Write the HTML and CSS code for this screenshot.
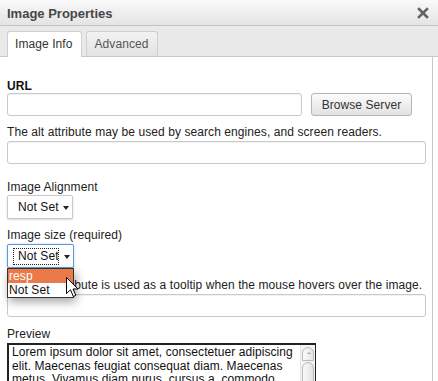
FILE: index.html
```html
<!DOCTYPE html>
<html lang="en">
<head>
    <meta charset="UTF-8">
    <title>Image Properties</title>
    <link rel="stylesheet" href="styles.css">
</head>
<body>
    <div class="dialog">
        <div class="titlebar">
            <span class="title">Image Properties</span>
            <span class="close">
                <svg width="12" height="12" viewBox="0 0 12 12"><path d="M2 2 L10 10 M10 2 L2 10" stroke="#555" stroke-width="2.6" stroke-linecap="square"/></svg>
            </span>
        </div>

        <div class="tabs">
            <a class="tab active">Image Info</a>
            <a class="tab">Advanced</a>
        </div>

        <div class="body">
            <div class="label bold first">URL</div>
            <div class="url-row">
                <div class="text-input url"></div>
                <button class="browse">Browse Server</button>
            </div>

            <div class="label gap-s">The alt attribute may be used by search engines, and screen readers.</div>
            <div class="text-input wide"></div>

            <div class="label gap-l">Image Alignment</div>
            <div class="select">
                <span class="select-text">Not Set</span>
                <span class="arrow"></span>
            </div>

            <div class="label gap-s">Image size (required)</div>
            <div class="select-holder">
                <div class="select focused">
                    <span class="select-text dotted">Not Set</span>
                    <span class="arrow"></span>
                </div>
                <!-- opened list of the select -->
                <ul class="dropdown">
                    <li class="hover">resp</li>
                    <li>Not Set</li>
                </ul>
                <svg class="cursor" width="13" height="21" viewBox="0 0 13 21">
                    <path d="M0.5 0.5 L0.5 16.5 L4.5 12.8 L7.3 19.5 L9.8 18.4 L7.1 12 L12 12 Z" fill="#fff" stroke="#000" stroke-width="1" stroke-linejoin="round"/>
                </svg>
            </div>

            <div class="label gap-m">The title attribute is used as a tooltip when the mouse hovers over the image.</div>
            <div class="text-input wide"></div>

            <div class="label gap-m">Preview</div>
            <div class="preview">
                <div class="preview-text">Lorem ipsum dolor sit amet, consectetuer adipiscing elit. Maecenas feugiat consequat diam. Maecenas metus. Vivamus diam purus, cursus a, commodo non, facilisis vitae, nulla.</div>
                <div class="scrollbar">
                    <div class="scroll-up"></div>
                    <div class="scroll-thumb"></div>
                </div>
            </div>
        </div>
    </div>
</body>
</html>
```

FILE: styles.css
```css
body {
    margin: 0;
    padding: 0;
    font-family: 'Liberation Sans', Arial, sans-serif;
    font-size: 12px;
    letter-spacing: 0.08px;
    color: #222;
    background: #fff;
}

.dialog {
    width: 438px;
    height: 381px;
    overflow: hidden;
}

.titlebar {
    height: 25px;
    display: flex;
    align-items: center;
    justify-content: space-between;
    padding: 0 9px 0 7px;
    background: linear-gradient(#f9f9f9, #e4e4e4);
    border-bottom: 1px solid #c4c4c4;
}

.title {
    font-size: 13px;
    font-weight: bold;
    color: #474747;
    padding-top: 1px;
    letter-spacing: 0;
}

.close {
    display: flex;
    opacity: 0.9;
}

.tabs {
    height: 30px;
    display: flex;
    align-items: flex-end;
    gap: 4px;
    padding: 0 7px;
    background: #e9e9e9;
    border-bottom: 1px solid #c8c8c8;
}

.tab {
    height: 24px;
    line-height: 24px;
    padding: 0 8px;
    font-size: 12px;
    color: #555;
    background: linear-gradient(#f2f2f2, #e3e3e3);
    border: 1px solid #cfcfcf;
    border-bottom: none;
    border-radius: 3px 3px 0 0;
}

.tab.active {
    height: 25px;
    padding: 0 8px 0 7px;
    background: #fff;
    color: #333;
    margin-bottom: -1px;
}

.body {
    height: 400px;
    padding: 0 0 0 7px;
    margin-right: 5px;
    border-right: 1px solid #c8c8c8;
}

.label {
    line-height: 14px;
    white-space: nowrap;
}

.label.bold {
    font-weight: bold;
    color: #111;
}

.label.first {
    padding-top: 22px;
}

.gap-s {
    margin-top: 9px;
    margin-bottom: 2px;
}

.gap-m {
    margin-top: 10px;
    margin-bottom: 2px;
}

.gap-l {
    margin-top: 16px;
    margin-bottom: 1px;
}

.url-row {
    display: flex;
    gap: 9px;
}

.text-input {
    height: 21px;
    border: 1px solid #c9c9c9;
    border-radius: 3px;
    background: #fff;
    box-shadow: inset 0 1px 1px rgba(0, 0, 0, 0.06);
}

.text-input.url {
    width: 293px;
}

.text-input.wide {
    width: 417px;
}

.browse {
    width: 101px;
    height: 23px;
    padding: 0;
    font-family: 'Liberation Sans', Arial, sans-serif;
    font-size: 12px;
    letter-spacing: 0.08px;
    color: #333;
    background: linear-gradient(#fbfbfb, #e2e2e2);
    border: 1px solid #b6b6b6;
    border-radius: 3px;
}

.select {
    width: 64px;
    height: 22px;
    display: flex;
    align-items: center;
    border: 1px solid #c9c9c9;
    border-radius: 2px;
    background: #fff;
    box-shadow: 0 1px 2px rgba(0, 0, 0, 0.15);
    position: relative;
}

.select-text {
    margin-left: 10px;
    font-size: 12px;
    color: #111;
}

.arrow {
    position: absolute;
    right: 3px;
    top: 10px;
    width: 0;
    height: 0;
    border-left: 3px solid transparent;
    border-right: 3px solid transparent;
    border-top: 4px solid #222;
}

.select.focused {
    width: 65px;
    border: 1px solid #5a9bdc;
    box-shadow: 0 0 2px rgba(90, 155, 220, 0.5);
}

.select-text.dotted {
    margin-left: 5px;
    width: 40px;
    padding-left: 4px;
    height: 15px;
    line-height: 15px;
    overflow: hidden;
    white-space: nowrap;
    border: 1px dotted #222;
}

.select-holder {
    position: relative;
}

.dropdown {
    position: absolute;
    top: 24px;
    left: 0;
    width: 65px;
    margin: 0;
    padding: 0;
    list-style: none;
    background: #fff;
    border: 1px solid #333;
    box-shadow: 2px 4px 10px rgba(0, 0, 0, 0.35);
    z-index: 10;
}

.dropdown li {
    height: 14px;
    line-height: 14px;
    padding-left: 1px;
    font-size: 12px;
    color: #111;
}

.dropdown li.hover {
    background: #eb7a4b;
    color: #fff;
}

.cursor {
    position: absolute;
    left: 59px;
    top: 33px;
    z-index: 11;
}

.preview {
    width: 306px;
    height: 60px;
    display: flex;
    border: 2px solid #222;
    border-right-width: 1px;
    background: #fff;
}

.preview-text {
    flex: 1;
    padding: 1px 3px;
    font-size: 12px;
    line-height: 13.5px;
    color: #111;
}

.scrollbar {
    width: 14px;
    padding-top: 2px;
    background: #f4f4f4;
    border-left: 1px solid #e4e4e4;
}

.scroll-up {
    height: 12px;
    margin: 0 1px;
    border: 1px solid #bbb;
    border-radius: 6px 6px 0 0;
    background: linear-gradient(90deg, #fafafa, #e6e6e6);
    position: relative;
}

.scroll-up::after {
    content: "";
    position: absolute;
    left: 4px;
    top: 4px;
    border-left: 2px solid transparent;
    border-right: 2px solid transparent;
    border-bottom: 2px solid #aaa;
}

.scroll-thumb {
    height: 40px;
    margin: 1px 1px 0;
    border: 1px solid #bbb;
    border-radius: 6px;
    background: linear-gradient(90deg, #fafafa, #e2e2e2);
}
```
